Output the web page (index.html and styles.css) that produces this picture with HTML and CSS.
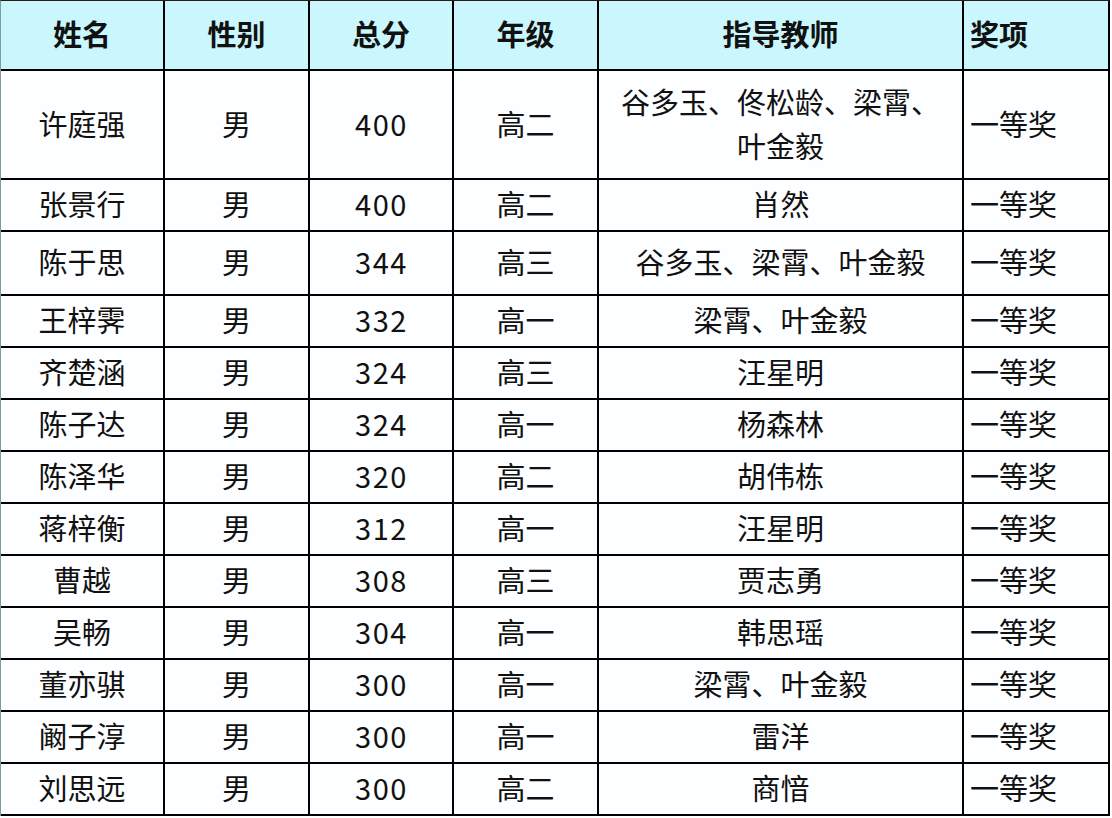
FILE: index.html
```html
<!DOCTYPE html>
<html lang="zh-CN">
<head>
<meta charset="utf-8">
<title>获奖名单</title>
<link rel="stylesheet" href="styles.css">
</head>
<body>
<div class="sheet">
  <div class="cell head">姓名</div><div class="cell head">性别</div><div class="cell head">总分</div><div class="cell head">年级</div><div class="cell head">指导教师</div><div class="cell head left">奖项</div>

  <div class="cell">许庭强</div><div class="cell">男</div><div class="cell num">400</div><div class="cell">高二</div><div class="cell wrap">谷多玉、佟松龄、梁霄、叶金毅</div><div class="cell left">一等奖</div>
  <div class="cell">张景行</div><div class="cell">男</div><div class="cell num">400</div><div class="cell">高二</div><div class="cell">肖然</div><div class="cell left">一等奖</div>
  <div class="cell">陈于思</div><div class="cell">男</div><div class="cell num">344</div><div class="cell">高三</div><div class="cell">谷多玉、梁霄、叶金毅</div><div class="cell left">一等奖</div>
  <div class="cell">王梓霁</div><div class="cell">男</div><div class="cell num">332</div><div class="cell">高一</div><div class="cell">梁霄、叶金毅</div><div class="cell left">一等奖</div>
  <div class="cell">齐楚涵</div><div class="cell">男</div><div class="cell num">324</div><div class="cell">高三</div><div class="cell">汪星明</div><div class="cell left">一等奖</div>
  <div class="cell">陈子达</div><div class="cell">男</div><div class="cell num">324</div><div class="cell">高一</div><div class="cell">杨森林</div><div class="cell left">一等奖</div>
  <div class="cell">陈泽华</div><div class="cell">男</div><div class="cell num">320</div><div class="cell">高二</div><div class="cell">胡伟栋</div><div class="cell left">一等奖</div>
  <div class="cell">蒋梓衡</div><div class="cell">男</div><div class="cell num">312</div><div class="cell">高一</div><div class="cell">汪星明</div><div class="cell left">一等奖</div>
  <div class="cell">曹越</div><div class="cell">男</div><div class="cell num">308</div><div class="cell">高三</div><div class="cell">贾志勇</div><div class="cell left">一等奖</div>
  <div class="cell">吴畅</div><div class="cell">男</div><div class="cell num">304</div><div class="cell">高一</div><div class="cell">韩思瑶</div><div class="cell left">一等奖</div>
  <div class="cell">董亦骐</div><div class="cell">男</div><div class="cell num">300</div><div class="cell">高一</div><div class="cell">梁霄、叶金毅</div><div class="cell left">一等奖</div>
  <div class="cell">阚子淳</div><div class="cell">男</div><div class="cell num">300</div><div class="cell">高一</div><div class="cell">雷洋</div><div class="cell left">一等奖</div>
  <div class="cell">刘思远</div><div class="cell">男</div><div class="cell num">300</div><div class="cell">高二</div><div class="cell">商愔</div><div class="cell left">一等奖</div>
</div>
</body>
</html>
```
FILE: styles.css
```css
html, body {
  margin: 0;
  padding: 0;
  background: #ffffff;
}

.sheet {
  display: grid;
  grid-template-columns: 164px 145px 144px 145px 365px 146px;
  grid-template-rows: 70px 109px 52px 64px repeat(10, 52px);
  width: max-content;
  border-top: 1px solid #2a1c18;
  border-left: 1px solid #7f9a9a;
  font-family: "Noto Sans CJK SC", "Noto Sans", sans-serif;
  font-size: 29px;
  color: #111111;
  background: #fdfeff;
}

.cell {
  box-sizing: border-box;
  border-right: 2px solid #000000;
  border-bottom: 2px solid #000000;
  display: flex;
  align-items: center;
  justify-content: center;
  text-align: center;
  padding: 0 12px 4px;
  line-height: 44px;
  white-space: nowrap;
}

.cell.num {
  letter-spacing: 1.5px;
  padding-left: 13px;
}

.cell.wrap {
  white-space: normal;
  padding-bottom: 4px;
}

.cell.left {
  justify-content: flex-start;
  text-align: left;
  padding-left: 6px;
}

.cell.head {
  background: #c9f7fd;
  font-weight: bold;
}
```
